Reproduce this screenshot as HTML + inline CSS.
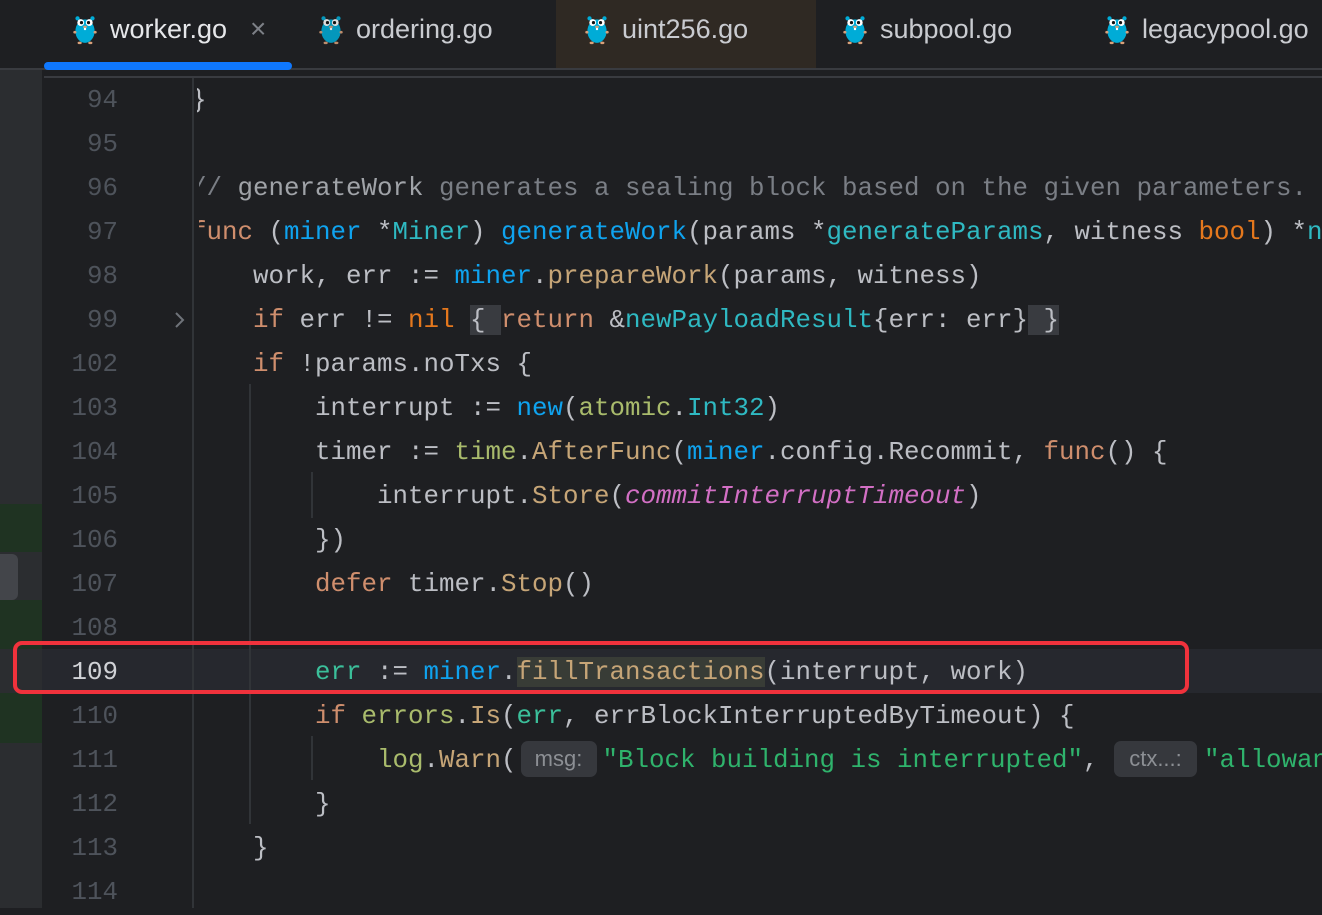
<!DOCTYPE html>
<html><head><meta charset="utf-8"><style>
*{margin:0;padding:0;box-sizing:border-box}
body{width:1322px;height:908px;overflow:hidden;background:#1e1f22;position:relative;font-family:"Liberation Mono",monospace}
.abs{position:absolute}
.tabs{left:0;top:0;width:1322px;height:68px;background:#1e1f22}
.tab{position:absolute;top:0;height:68px;font-family:"Liberation Sans",sans-serif;font-size:27px;color:#c9cbd0;line-height:58px}
.tab svg{position:absolute;top:13px}
.ln{position:absolute;left:42px;width:76px;text-align:right;font-size:25.8px;color:#4e535b;height:44px;line-height:44px}
.code{position:absolute;left:199px;width:1123px;height:44px;overflow:hidden}
.code pre{position:absolute;left:-8px;top:0;font-family:"Liberation Mono",monospace;font-size:25.83px;line-height:44px;color:#bcbec4;white-space:pre}
.k{color:#cf8e6d}.b{color:#0fa3ef}.t{color:#2fb9c2}.m{color:#c6a577}.p{color:#a9bb6c}.o{color:#e5781d}.s{color:#2fb36c}.i{color:#d26fc4;font-style:italic}.c{color:#7a7e85}.cd{color:#a0a3a8}.v{color:#3bbf9a}
.hint{display:inline-block;background:#36383d;color:#8c8f94;font-family:"Liberation Sans",sans-serif;font-size:22px;line-height:36px;height:36px;border-radius:7px;text-align:center;vertical-align:1px}
.bx{background:#393b40}
.g{position:absolute;width:2px;background:#313438}
</style></head><body>
<div class="abs" style="left:0;top:0;width:42px;height:908px;background:#2b2d30"></div>
<div class="abs" style="left:0;top:504px;width:42px;height:48px;background:#1f3322"></div>
<div class="abs" style="left:0;top:552px;width:42px;height:48px;background:#2b2d30"></div>
<div class="abs" style="left:0;top:554px;width:18px;height:46px;background:#43454a;border-radius:0 6px 6px 0"></div>
<div class="abs" style="left:0;top:600px;width:42px;height:49px;background:#1f3322"></div>
<div class="abs" style="left:0;top:693px;width:42px;height:50px;background:#1f3322"></div>

<div class="abs tabs"></div>
<div class="abs" style="left:556px;top:0;width:260px;height:68px;background:#2f2923"></div>
<div class="abs" style="left:0;top:68px;width:1322px;height:2px;background:#393b40"></div>
<div class="abs" style="left:44px;top:76px;width:1278px;height:2px;background:#393b40"></div>
<div class="abs" style="left:44px;top:62px;width:248px;height:8px;background:#0f78ff;border-radius:4px"></div>

<svg width="0" height="0" style="position:absolute"><defs><g id="gopher"><ellipse cx="12" cy="17" rx="9" ry="11" fill="#00acd7"/><circle cx="5" cy="5" r="2" fill="#00acd7"/><circle cx="19" cy="5" r="2" fill="#00acd7"/><circle cx="8" cy="9" r="3.2" fill="#fff"/><circle cx="16" cy="9" r="3.2" fill="#fff"/><circle cx="8.7" cy="9" r="1.5" fill="#111"/><circle cx="15.3" cy="9" r="1.5" fill="#111"/><ellipse cx="12" cy="13" rx="1.8" ry="1.2" fill="#c9a27e"/><rect x="11" y="14" width="2" height="2" fill="#fff"/><ellipse cx="2.5" cy="18" rx="1.5" ry="1.2" fill="#d9a07a"/><ellipse cx="21.5" cy="18" rx="1.5" ry="1.2" fill="#d9a07a"/><ellipse cx="7" cy="28" rx="2" ry="1.2" fill="#d9a07a"/><ellipse cx="17" cy="28" rx="2" ry="1.2" fill="#d9a07a"/></g></defs></svg>

<div class="tab" style="left:72px;width:230px"><svg width="26" height="32" viewBox="0 0 24 30"><use href="#gopher"/></svg><span style="position:absolute;left:38px;color:#e6e7ea">worker.go</span><span style="position:absolute;left:178px;color:#7d8087;font-size:28px">×</span></div>
<div class="tab" style="left:318px;width:220px"><svg width="26" height="32" viewBox="0 0 24 30"><use href="#gopher" style="opacity:.85"/></svg><span style="position:absolute;left:38px">ordering.go</span></div>
<div class="tab" style="left:584px;width:220px"><svg width="26" height="32" viewBox="0 0 24 30"><use href="#gopher"/></svg><span style="position:absolute;left:38px">uint256.go</span></div>
<div class="tab" style="left:842px;width:220px"><svg width="26" height="32" viewBox="0 0 24 30"><use href="#gopher"/></svg><span style="position:absolute;left:38px">subpool.go</span></div>
<div class="tab" style="left:1104px;width:230px"><svg width="26" height="32" viewBox="0 0 24 30"><use href="#gopher"/></svg><span style="position:absolute;left:38px">legacypool.go</span></div>

<div class="abs" style="left:42px;top:649px;width:1280px;height:44px;background:#26282e"></div>

<div class="abs" style="left:192px;top:78px;width:2px;height:830px;background:#313438"></div>
<div class="g" style="left:249px;top:384px;height:440px"></div>
<div class="g" style="left:311px;top:472px;height:46px"></div>
<div class="g" style="left:311px;top:736px;height:44px"></div>

<svg class="abs" style="left:172px;top:310px" width="14" height="20" viewBox="0 0 14 20"><path d="M4 3 L11 10 L4 17" fill="none" stroke="#6f737a" stroke-width="2"/></svg>

<div class="ln" style="top:79px">94</div><div class="ln" style="top:123px">95</div><div class="ln" style="top:167px">96</div><div class="ln" style="top:211px">97</div><div class="ln" style="top:255px">98</div><div class="ln" style="top:299px">99</div><div class="ln" style="top:343px">102</div><div class="ln" style="top:387px">103</div><div class="ln" style="top:431px">104</div><div class="ln" style="top:475px">105</div><div class="ln" style="top:519px">106</div><div class="ln" style="top:563px">107</div><div class="ln" style="top:607px">108</div><div class="ln" style="top:651px;color:#d0d2d6">109</div><div class="ln" style="top:695px">110</div><div class="ln" style="top:739px">111</div><div class="ln" style="top:783px">112</div><div class="ln" style="top:827px">113</div><div class="ln" style="top:871px">114</div>

<div class="code" style="top:78px;left:197px"><pre style="left:-6px">}</pre></div>
<div class="code" style="top:166px"><pre><span class="c">// <span class="cd">generateWork</span> generates a sealing block based on the given parameters.</span></pre></div>
<div class="code" style="top:210px"><pre><span class="k">func</span> (<span class="b">miner</span> *<span class="t">Miner</span>) <span class="b">generateWork</span>(params *<span class="t">generateParams</span>, witness <span class="o">bool</span>) *<span class="t">newPayloadResult</span> {</pre></div>
<div class="code" style="top:254px"><pre>    work, err := <span class="b">miner</span>.<span class="m">prepareWork</span>(params, witness)</pre></div>
<div class="code" style="top:298px"><pre>    <span class="k">if</span> err != <span class="o">nil</span> <span class="bx">{ </span><span class="k">return</span> &amp;<span class="t">newPayloadResult</span>{err: err}<span class="bx"> }</span></pre></div>
<div class="code" style="top:342px"><pre>    <span class="k">if</span> !params.noTxs {</pre></div>
<div class="code" style="top:386px"><pre>        interrupt := <span class="b">new</span>(<span class="p">atomic</span>.<span class="t">Int32</span>)</pre></div>
<div class="code" style="top:430px"><pre>        timer := <span class="p">time</span>.<span class="m">AfterFunc</span>(<span class="b">miner</span>.config.Recommit, <span class="k">func</span>() {</pre></div>
<div class="code" style="top:474px"><pre>            interrupt.<span class="m">Store</span>(<span class="i">commitInterruptTimeout</span>)</pre></div>
<div class="code" style="top:518px"><pre>        })</pre></div>
<div class="code" style="top:562px"><pre>        <span class="k">defer</span> timer.<span class="m">Stop</span>()</pre></div>
<div class="code" style="top:650px"><pre>        <span class="v">err</span> := <span class="b">miner</span>.<span class="m" style="background:#383c36">fillTransactions</span>(interrupt, work)</pre></div>
<div class="code" style="top:694px"><pre>        <span class="k">if</span> <span class="p">errors</span>.<span class="m">Is</span>(<span class="v">err</span>, errBlockInterruptedByTimeout) {</pre></div>
<div class="code" style="top:738px"><pre>            <span class="p">log</span>.<span class="m">Warn</span>(<span class="hint" style="width:76px;margin:0 6px 0 4px">msg:</span><span class="s">"Block building is interrupted"</span>, <span class="hint" style="width:83px;margin:0 7px 0 0">ctx...:</span><span class="s">"allowance"</span></pre></div>
<div class="code" style="top:782px"><pre>        }</pre></div>
<div class="code" style="top:826px"><pre>    }</pre></div>

<div class="abs" style="left:13px;top:641px;width:1176px;height:53px;border:4px solid #f0323c;border-radius:9px"></div>
</body></html>
